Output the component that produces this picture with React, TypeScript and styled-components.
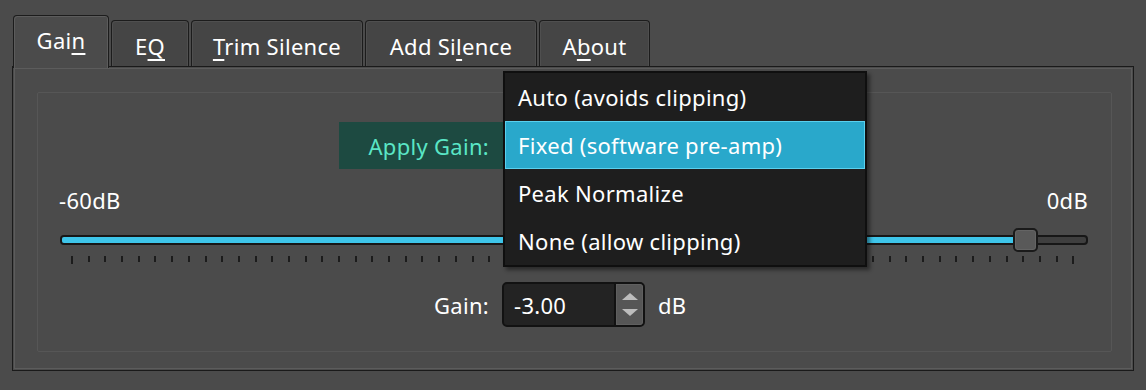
import React from "react";
import styled, { createGlobalStyle, css } from "styled-components";

const GlobalStyle = createGlobalStyle`
  html, body {
    margin: 0;
    padding: 0;
    background: #4b4b4b;
  }
  body {
    font-family: "Noto Sans", "Open Sans", sans-serif;
    font-size: 22px;
    letter-spacing: 0.3px;
    color: #ffffff;
  }
`;

type TabDef = { parts: [string, string, string]; width: number };

const TABS: TabDef[] = [
  { parts: ["Gai", "n", ""], width: 96 },
  { parts: ["E", "Q", ""], width: 78 },
  { parts: ["", "T", "rim Silence"], width: 172 },
  { parts: ["Add Si", "l", "ence"], width: 172 },
  { parts: ["A", "b", "out"], width: 111 },
];

const MODES = [
  "Auto (avoids clipping)",
  "Fixed (software pre-amp)",
  "Peak Normalize",
  "None (allow clipping)",
];

const MIN_DB = -60;
const MAX_DB = 0;
const VALUE_DB = -3;
const TRACK_W = 1028;
const HANDLE_W = 25;

const Window = styled.div`
  width: 1146px;
  height: 390px;
  box-sizing: border-box;
  padding: 15px 12px 0 12px;
  overflow: hidden;
`;

const TabBar = styled.div`
  display: flex;
  align-items: flex-end;
  gap: 2px;
  height: 51px;
  padding-left: 1px;
  position: relative;
  z-index: 2;
`;

const Tab = styled.div<{ $active?: boolean; $w: number }>`
  width: ${({ $w }) => $w}px;
  height: 46px;
  box-sizing: border-box;
  display: flex;
  align-items: center;
  justify-content: center;
  padding-top: 4px;
  background: #454545;
  border: 1px solid #1c1c1c;
  border-bottom: none;
  border-radius: 4px 4px 0 0;
  box-shadow: inset 1px 1px 0 #4f4f4f, inset -1px 0 0 #4f4f4f;

  ${({ $active }) =>
    $active &&
    css`
      height: 53px;
      margin-bottom: -2px;
      padding-top: 0;
      padding-bottom: 4px;
      background: #4b4b4b;
      box-shadow: inset 1px 1px 0 #5c5c5c, inset -1px 0 0 #5c5c5c;
    `}
`;

const Mnemonic = styled.span`
  text-decoration: underline;
  text-underline-offset: 4px;
  text-decoration-thickness: 2px;
`;

const Panel = styled.div`
  height: 305px;
  box-sizing: border-box;
  border: 1px solid #1a1a1a;
  box-shadow: inset 0 0 0 1px #4b4b4b, inset 0 0 0 2px #5c5c5c;
  padding: 25px 21px 0 24px;
  position: relative;
  z-index: 1;
`;

const GroupBox = styled.div`
  height: 260px;
  box-sizing: border-box;
  border: 1px solid #565656;
  border-radius: 2px;
  display: flex;
  flex-direction: column;
`;

const ApplyRow = styled.div`
  display: flex;
  margin: 29px 0 0 301px;
  height: 47px;
`;

const ApplyLabel = styled.div`
  width: 165px;
  box-sizing: border-box;
  background: #1d4a41;
  color: #5ae6c6;
  display: flex;
  align-items: center;
  justify-content: flex-end;
  padding-right: 15px;
`;

const ComboWrap = styled.div`
  position: relative;
  width: 363px;
  background: #2a2a2a;
`;

const Menu = styled.div`
  position: absolute;
  top: -51px;
  left: -1px;
  width: 364px;
  box-sizing: border-box;
  background: #1e1e1e;
  border: 2px solid #0f0f0f;
  box-shadow: 3px 3px 4px rgba(0, 0, 0, 0.45);
  display: flex;
  flex-direction: column;
  z-index: 5;
`;

const MenuItem = styled.div<{ $selected?: boolean }>`
  height: 48px;
  box-sizing: border-box;
  display: flex;
  align-items: center;
  padding-left: 12px;
  color: #ffffff;
  border: 1px solid transparent;

  ${({ $selected }) =>
    $selected &&
    css`
      background: #29a8cb;
      border-color: #5ad0ee;
    `}
`;

const SliderSection = styled.div`
  display: flex;
  flex-direction: column;
  padding: 0 23px 0 22px;
`;

const RangeLabels = styled.div`
  display: flex;
  justify-content: space-between;
  margin: 16px 0 0 -1px;
  height: 30px;
  align-items: center;
`;

const Track = styled.div`
  position: relative;
  margin-top: 13px;
  height: 24px;
`;

const Groove = styled.div`
  margin-top: 7px;
  height: 10px;
  box-sizing: border-box;
  border: 2px solid #171717;
  border-radius: 4px;
  background: #3f3f3f;
  display: flex;
  overflow: hidden;
`;

const Fill = styled.div`
  height: 100%;
  background: #3ec5ea;
`;

const Handle = styled.div`
  position: absolute;
  top: 0;
  width: ${HANDLE_W}px;
  height: 24px;
  box-sizing: border-box;
  background: #595959;
  border: 2px solid #1a1a1a;
  border-radius: 5px;
  box-shadow: inset 0 0 0 1px #646464;
`;

const Ticks = styled.div`
  display: flex;
  justify-content: space-between;
  align-items: flex-start;
  margin-top: 4px;
  padding: 0 13px 0 11px;
  height: 8px;
`;

const Tick = styled.div<{ $long?: boolean }>`
  width: 2px;
  height: ${({ $long }) => ($long ? 8 : 6)}px;
  background: #1c1c1c;
`;

const GainRow = styled.div`
  display: flex;
  align-items: center;
  gap: 13px;
  margin: 18px 0 0 371px;
`;

const GainLabel = styled.div`
  width: 80px;
  text-align: right;
`;

const SpinBox = styled.div`
  width: 143px;
  height: 45px;
  box-sizing: border-box;
  background: #232323;
  border: 2px solid #121212;
  border-radius: 5px;
  display: flex;
  overflow: hidden;
`;

const SpinValue = styled.div`
  flex: 1;
  display: flex;
  align-items: center;
  padding-left: 10px;
`;

const SpinButtons = styled.div`
  width: 27px;
  border-left: 2px solid #121212;
  background: #565656;
  box-shadow: inset 0 0 0 1px #5f5f5f;
  border-radius: 0 3px 3px 0;
  display: flex;
  flex-direction: column;
  align-items: center;
  justify-content: center;
  gap: 9px;
`;

const Arrow = styled.div<{ $down?: boolean }>`
  width: 0;
  height: 0;
  border-left: 8px solid transparent;
  border-right: 8px solid transparent;
  ${({ $down }) =>
    $down
      ? css`
          border-top: 7px solid #bdbdbd;
        `
      : css`
          border-bottom: 7px solid #bdbdbd;
        `}
`;

export default function App() {
  const frac = (VALUE_DB - MIN_DB) / (MAX_DB - MIN_DB);
  const handleLeft = Math.round(frac * (TRACK_W - HANDLE_W));
  const ticks = Array.from({ length: 61 }, (_, i) => i);

  return (
    <>
      <GlobalStyle />
      <Window>
        <TabBar>
          {TABS.map((t, i) => (
            <Tab key={i} $active={i === 0} $w={t.width}>
              <span>
                {t.parts[0]}
                <Mnemonic>{t.parts[1]}</Mnemonic>
                {t.parts[2]}
              </span>
            </Tab>
          ))}
        </TabBar>
        <Panel>
          <GroupBox>
            <ApplyRow>
              <ApplyLabel>Apply Gain:</ApplyLabel>
              <ComboWrap>
                <Menu>
                  {MODES.map((m, i) => (
                    <MenuItem key={m} $selected={i === 1}>
                      {m}
                    </MenuItem>
                  ))}
                </Menu>
              </ComboWrap>
            </ApplyRow>
            <SliderSection>
              <RangeLabels>
                <span>-60dB</span>
                <span>0dB</span>
              </RangeLabels>
              <Track>
                <Groove>
                  <Fill style={{ width: handleLeft + 10 }} />
                </Groove>
                <Handle style={{ left: handleLeft }} />
              </Track>
              <Ticks>
                {ticks.map((i) => (
                  <Tick key={i} $long={i === 0 || i === 60} />
                ))}
              </Ticks>
            </SliderSection>
            <GainRow>
              <GainLabel>Gain:</GainLabel>
              <SpinBox>
                <SpinValue>-3.00</SpinValue>
                <SpinButtons>
                  <Arrow />
                  <Arrow $down />
                </SpinButtons>
              </SpinBox>
              <span>dB</span>
            </GainRow>
          </GroupBox>
        </Panel>
      </Window>
    </>
  );
}
